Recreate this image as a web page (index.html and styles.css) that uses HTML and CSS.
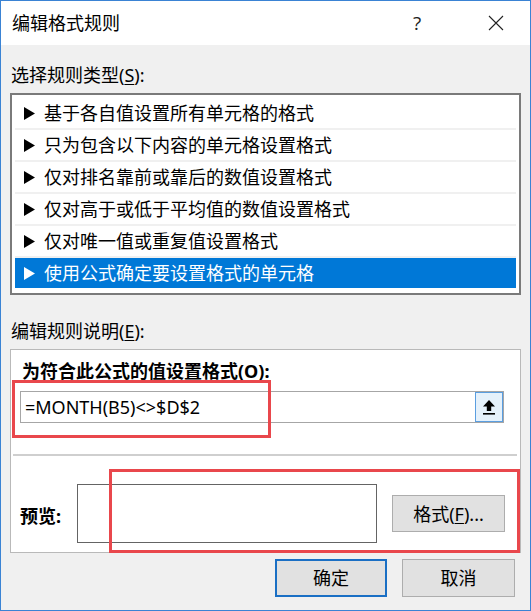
FILE: index.html
```html
<!DOCTYPE html>
<html lang="zh-CN">
<head>
<meta charset="utf-8">
<title>编辑格式规则</title>
<link rel="stylesheet" href="styles.css">
</head>
<body>
<div class="window">
  <div class="titlebar">
    <span class="title">编辑格式规则</span>
    <span class="help">?</span>
    <span class="close">
      <svg width="16" height="16" viewBox="0 0 16 16"><path d="M1 1 L15 15 M15 1 L1 15" stroke="#222" stroke-width="1.1" fill="none"/></svg>
    </span>
  </div>
  <div class="content">
    <div class="label label-type">选择规则类型(<u>S</u>):</div>
    <div class="listbox">
      <div class="item"><span class="tri"><svg width="11" height="13" viewBox="0 0 11 13"><path d="M0 0 L11 6.5 L0 13 Z"/></svg></span>基于各自值设置所有单元格的格式</div>
      <div class="item"><span class="tri"><svg width="11" height="13" viewBox="0 0 11 13"><path d="M0 0 L11 6.5 L0 13 Z"/></svg></span>只为包含以下内容的单元格设置格式</div>
      <div class="item"><span class="tri"><svg width="11" height="13" viewBox="0 0 11 13"><path d="M0 0 L11 6.5 L0 13 Z"/></svg></span>仅对排名靠前或靠后的数值设置格式</div>
      <div class="item"><span class="tri"><svg width="11" height="13" viewBox="0 0 11 13"><path d="M0 0 L11 6.5 L0 13 Z"/></svg></span>仅对高于或低于平均值的数值设置格式</div>
      <div class="item"><span class="tri"><svg width="11" height="13" viewBox="0 0 11 13"><path d="M0 0 L11 6.5 L0 13 Z"/></svg></span>仅对唯一值或重复值设置格式</div>
      <div class="item selected"><span class="tri"><svg width="11" height="13" viewBox="0 0 11 13"><path d="M0 0 L11 6.5 L0 13 Z"/></svg></span>使用公式确定要设置格式的单元格</div>
    </div>
    <div class="label label-desc">编辑规则说明(<u>E</u>):</div>
    <div class="panel">
      <div class="formula-head">为符合此公式的值设置格式(O):</div>
      <div class="input">
        <span class="formula">=MONTH(B5)&lt;&gt;$D$2</span>
        <span class="refbtn">
          <svg width="12" height="15" viewBox="0 0 12 15"><path d="M6 0 L12 6.5 H8.2 V11 H3.8 V6.5 H0 Z" fill="#000"/><rect x="0" y="13" width="12" height="1.6" fill="#000"/></svg>
        </span>
      </div>
      <div class="sep"></div>
      <div class="preview-row">
        <span class="preview-label">预览:</span>
        <div class="preview-box"></div>
        <span class="btn fmt">格式(<u>F</u>)...</span>
      </div>
      <div class="mark mark-formula"></div>
      <div class="mark mark-preview"></div>
    </div>
    <div class="buttons">
      <span class="btn ok">确定</span>
      <span class="btn cancel">取消</span>
    </div>
  </div>
</div>
</body>
</html>
```
FILE: styles.css
```css
html, body {
  margin: 0;
  padding: 0;
}
body {
  font-family: "Noto Sans", "Noto Sans CJK SC", sans-serif;
  font-size: 18px;
  color: #000;
  background: #f0f0f0;
}
.window {
  width: 531px;
  height: 611px;
  box-sizing: border-box;
  border: 1px solid #3a83d4;
  background: #f0f0f0;
  display: flex;
  flex-direction: column;
}
.titlebar {
  height: 44px;
  background: #fff;
  display: flex;
  align-items: center;
  padding-left: 11px;
  position: relative;
}
.title {
  font-size: 18px;
  line-height: 24px;
  color: #000;
  flex: 1;
}
.help {
  font-size: 19px;
  line-height: 24px;
  color: #222;
  width: 12px;
  margin-right: 63px;
  font-family: "Open Sans", sans-serif;
}
.close {
  display: flex;
  width: 16px;
  margin-right: 26px;
}
.content {
  padding: 0 9px;
  flex: 1;
  display: flex;
  flex-direction: column;
}
.label {
  line-height: 24px;
  padding-left: 1px;
}
.label u {
  text-underline-offset: 2px;
}
.label-type {
  margin-top: 18px;
}
.listbox {
  margin-top: 6px;
  height: 202px;
  box-sizing: border-box;
  border: 2px solid #7a7a7a;
  background: #fff;
  padding: 3px 3px 0 3px;
}
.item {
  height: 30px;
  border-bottom: 2px solid #f0f0f0;
  display: flex;
  align-items: center;
  padding-left: 9px;
  line-height: 24px;
  white-space: nowrap;
}
.item:last-child {
  border-bottom: none;
}
.tri {
  width: 20px;
  display: flex;
  align-items: center;
}
.tri svg path {
  fill: #000;
}
.item.selected {
  background: #0078d7;
  color: #fff;
}
.item.selected .tri svg path {
  fill: #fff;
}
.label-desc {
  margin-top: 24px;
}
.panel {
  margin-top: 6px;
  position: relative;
  height: 204px;
  box-sizing: border-box;
  border: 1px solid #b9b9b9;
  background: #fff;
  padding: 9px 0 0 0;
}
.formula-head {
  font-weight: bold;
  line-height: 24px;
  padding-left: 11px;
}
.input {
  margin: 8px 0 0 9px;
  width: 484px;
  height: 32px;
  box-sizing: border-box;
  border: 1px solid #a6a6a6;
  display: flex;
  align-items: center;
  justify-content: space-between;
}
.formula {
  padding-left: 4px;
  line-height: 24px;
  font-size: 18px;
}
.refbtn {
  width: 28px;
  height: 30px;
  box-sizing: border-box;
  border: 1px solid #5a9ee0;
  background: #e5f1fb;
  display: flex;
  align-items: center;
  justify-content: center;
  margin-right: 0;
}
.sep {
  margin: 31px 3px 0 2px;
  height: 2px;
  background: #cfcfcf;
}
.preview-row {
  margin-top: 28px;
  display: flex;
  align-items: center;
  padding-left: 9px;
}
.preview-label {
  font-weight: bold;
  width: 57px;
  line-height: 24px;
  position: relative;
  top: 2px;
}
.preview-box {
  width: 300px;
  height: 59px;
  box-sizing: border-box;
  border: 1px solid #646464;
  background: #fff;
}
.btn {
  display: flex;
  align-items: center;
  justify-content: center;
  box-sizing: border-box;
  background: #e1e1e1;
  border: 1px solid #adadad;
  line-height: 24px;
}
.fmt {
  margin-left: 15px;
  width: 113px;
  height: 37px;
}
.fmt u {
  text-underline-offset: 2px;
}
.mark {
  position: absolute;
  border: 3px solid #e9474c;
  box-sizing: border-box;
}
.mark-formula {
  left: 1px;
  top: 30px;
  width: 259px;
  height: 58px;
}
.mark-preview {
  left: 98px;
  top: 119px;
  width: 411px;
  height: 84px;
}
.buttons {
  margin-top: 6px;
  display: flex;
  justify-content: flex-end;
  gap: 15px;
  padding-right: 6px;
}
.ok {
  width: 112px;
  height: 38px;
  border: 2px solid #1a6fc4;
}
.cancel {
  width: 113px;
  height: 38px;
}
```
